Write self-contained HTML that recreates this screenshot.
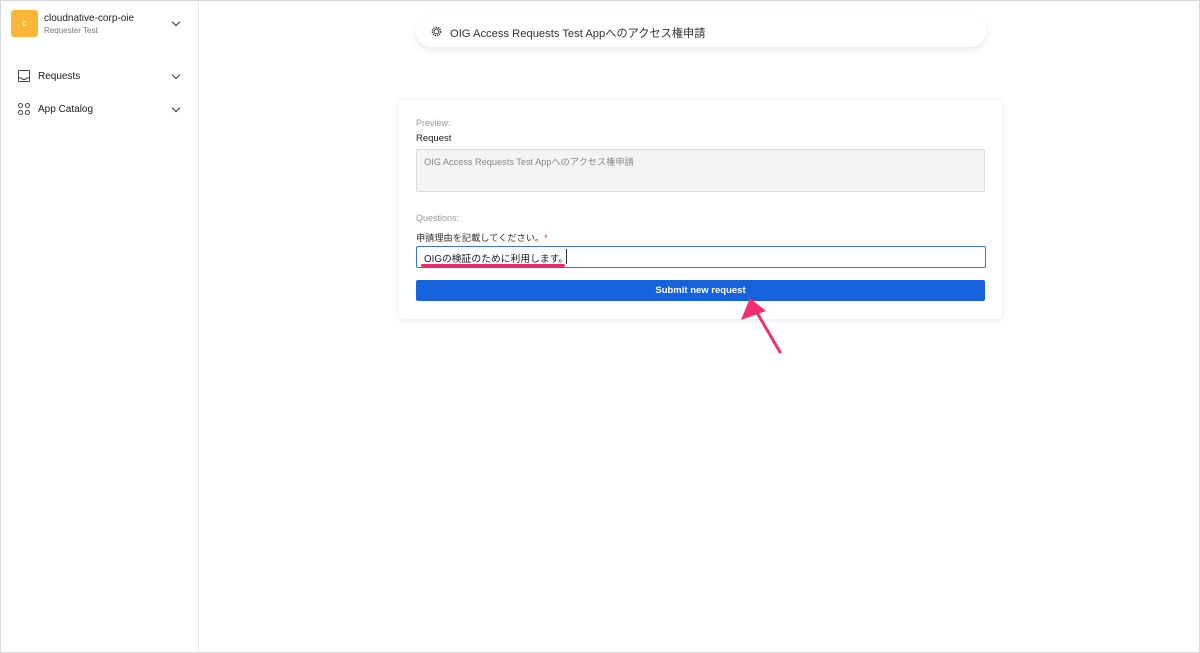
<!DOCTYPE html>
<html><head><meta charset="utf-8"><style>
*{box-sizing:border-box;margin:0;padding:0}
body{width:1200px;height:653px;background:#fff;font-family:"Liberation Sans","Noto Sans CJK JP",sans-serif;position:relative;overflow:hidden;color:#1d1d21}
.frame{position:absolute;inset:0;border:1px solid #d8d8d8}
.side{position:absolute;left:0;top:0;width:199px;height:653px;border-right:1px solid #ececec}
.logo{position:absolute;left:11px;top:10px;width:27px;height:27px;background:#fbb637;border-radius:3px;color:#fff;font-size:9px;text-align:center;line-height:27px}
.t{position:absolute;white-space:nowrap}
.chev{position:absolute;width:6px;height:6px;border-right:1.6px solid #333;border-bottom:1.6px solid #333;transform:rotate(45deg)}
.pill{position:absolute;left:416px;top:16px;width:570px;height:31px;border-radius:16px;background:#fff;box-shadow:0 3px 7px rgba(0,0,0,.09)}
.card{position:absolute;left:399px;top:100px;width:603px;height:219px;background:#fff;border-radius:4px;box-shadow:0 1px 6px rgba(0,0,0,.1)}
.ta{position:absolute;left:416px;top:149px;width:569px;height:43px;background:#f4f4f4;border:1px solid #ddd;border-radius:2px}
.in{position:absolute;left:416px;top:246px;width:570px;height:22px;border:1px solid #3e6fd6;border-radius:2px}
.btn{position:absolute;left:416px;top:280px;width:569px;height:21px;background:#1662dd;border-radius:2px;color:#fff;font-weight:bold;font-size:9.5px;text-align:center;line-height:21px}
</style></head><body>
<div class="side">
<div class="logo">c</div>
<div class="t" style="left:44px;top:13px;font-size:10px">cloudnative-corp-oie</div>
<div class="t" style="left:44px;top:26px;font-size:8px;color:#777">Requester Test</div>
<div class="chev" style="left:173px;top:19px"></div>
<svg style="position:absolute;left:18px;top:70px" width="12" height="12" viewBox="0 0 12 12" fill="none" stroke="#444" stroke-width="1"><rect x=".5" y=".5" width="11" height="11" rx="1"/><path d="M.5 8h3l1 1.5h3l1-1.5h3"/></svg>
<div class="t" style="left:38px;top:71px;font-size:10px">Requests</div>
<div class="chev" style="left:173px;top:72px"></div>
<svg style="position:absolute;left:18px;top:103px" width="12" height="12" viewBox="0 0 12 12" fill="none" stroke="#444" stroke-width="1"><circle cx="2.5" cy="2.5" r="2"/><circle cx="9.5" cy="2.5" r="2"/><circle cx="2.5" cy="9.5" r="2"/><circle cx="9.5" cy="9.5" r="2"/></svg>
<div class="t" style="left:38px;top:104px;font-size:10px">App Catalog</div>
<div class="chev" style="left:173px;top:105px"></div>
</div>
<div class="pill"></div>
<svg style="position:absolute;left:431px;top:26px" width="11" height="11" viewBox="0 0 12 12"><circle cx="6" cy="6" r="4.5" fill="none" stroke="#333" stroke-width="1.5" stroke-dasharray="1.5 1"/><circle cx="6" cy="6" r="2.6" fill="none" stroke="#333" stroke-width="1"/></svg>
<div class="t" style="left:450px;top:25px;font-size:11.2px;color:#333">OIG Access Requests Test Appへのアクセス権申請</div>
<div class="card"></div>
<div class="t" style="left:416px;top:118px;font-size:9px;color:#999">Preview:</div>
<div class="t" style="left:416px;top:133px;font-size:9.5px">Request</div>
<div class="ta"></div>
<div class="t" style="left:424px;top:154px;font-size:9.2px;color:#888">OIG Access Requests Test Appへのアクセス権申請</div>
<div class="t" style="left:416px;top:213px;font-size:9px;color:#999">Questions:</div>
<div class="t" style="left:416px;top:230px;font-size:9.2px;color:#333">申請理由を記載してください。<span style="color:#d33">*</span></div>
<div class="in"></div>
<div class="t" style="left:424px;top:251px;font-size:9.8px">OIGの検証のために利用します。</div>
<div style="position:absolute;left:566px;top:249px;width:1px;height:15px;background:#333"></div>
<div style="position:absolute;left:421px;top:264px;width:144px;height:3px;background:#ec2a6e;border-radius:2px"></div>
<div class="btn">Submit new request</div>
<svg style="position:absolute;left:0;top:0" width="1200" height="653"><path d="M780 352 L756 311" stroke="#f2306f" stroke-width="3" stroke-linecap="round"/><path d="M750 298 L741 320 L766 311 Z" fill="#f2306f"/></svg>
<div class="frame"></div>
</body></html>
